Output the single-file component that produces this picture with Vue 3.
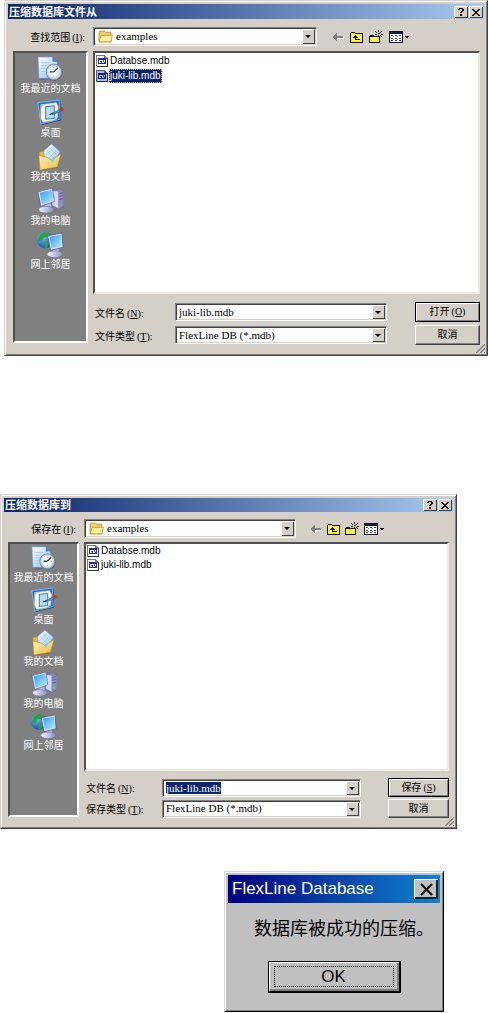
<template>
  <main class="page">
    <svg class="symbols" width="0" height="0" aria-hidden="true">
      <defs>
        <linearGradient id="screen" x1="0" y1="0" x2="1" y2="1">
          <stop offset="0" stop-color="#2f9bf0" />
          <stop offset="0.6" stop-color="#7fd0ff" />
          <stop offset="1" stop-color="#b8ecff" />
        </linearGradient>
        <linearGradient id="folder" x1="0" y1="0" x2="1" y2="1">
          <stop offset="0" stop-color="#fff6b8" />
          <stop offset="1" stop-color="#eebb3c" />
        </linearGradient>
        <linearGradient id="paper" x1="0" y1="0" x2="1" y2="1">
          <stop offset="0" stop-color="#ffffff" />
          <stop offset="1" stop-color="#8fc4f5" />
        </linearGradient>
        <linearGradient id="metal" x1="0" y1="0" x2="1" y2="0">
          <stop offset="0" stop-color="#f4f4fd" />
          <stop offset="1" stop-color="#9090c4" />
        </linearGradient>
        <radialGradient id="globe" cx="0.35" cy="0.3" r="0.8">
          <stop offset="0" stop-color="#7cc4ff" />
          <stop offset="1" stop-color="#0b3cb0" />
        </radialGradient>

        <symbol id="place-recent" viewBox="0 0 28 28">
          <path d="M2 3l15-1 5 5v18l-19 1z" fill="#444" opacity=".4" />
          <path d="M1 2h15l5 5v17H2z" fill="url(#paper)" stroke="#5d9be0" stroke-width=".7" />
          <path d="M16 2v5h5z" fill="#3b83dd" />
          <path d="M4 8h9M4 11h8M4 14h6M4 17h5M4 20h5" stroke="#9fcaf5" />
          <circle cx="18" cy="18" r="8.6" fill="#596579" />
          <circle cx="17.5" cy="17.5" r="8" fill="#c3d4e6" stroke="#8194ab" />
          <circle cx="17.5" cy="17.5" r="5.8" fill="#f5fbff" />
          <path d="M17.5 17.5l4-4M17.5 17.5h-4" stroke="#26456f" stroke-width="1.4" />
          <path d="M17.5 12.4v1.4M17.5 21.4v1.4M22.6 17.5h-1.4" stroke="#d88842" />
        </symbol>

        <symbol id="place-desktop" viewBox="0 0 28 28">
          <path d="M2 5l22-3 1 20-20 5z" fill="#173667" />
          <path d="M1 4l22-3 1 20-20 5z" fill="#1d6fd8" stroke="#8dc6ff" stroke-width=".8" />
          <path d="M4 6l16-2 2 4-1 12-4 2-11 2-2-4z" fill="#fff7d4" stroke="#f3d980" stroke-width=".6" />
          <path d="M4 6l4-1-4 4zM21 20l-4 2 4-5z" fill="#8ed0ff" />
          <path d="M9 8l9-1v13l-9 1z" fill="#b4ddff" stroke="#2778d2" />
          <path d="M15 15l9-4 1 2-9 3z" fill="#4aa2e8" stroke="#214d83" stroke-width=".6" />
          <path d="M13 16l4-1" stroke="#222" />
          <circle cx="25.5" cy="10.5" r="2" fill="#c4352a" />
        </symbol>

        <symbol id="place-documents" viewBox="0 0 28 28">
          <path d="M4 10l3-2 3 2 9 3v13L5 28z" fill="#333" opacity=".4" />
          <path d="M2 9l6-1 2 3 11-1v15L3 27z" fill="#e8b646" stroke="#a97818" stroke-width=".6" />
          <path d="M7 8l8-7 9 8-7 13-9-4z" fill="url(#paper)" stroke="#5f9ad8" stroke-width=".6" />
          <path d="M10 8l6 6M13 5l7 7M17 5l-8 8M20 8l-8 8" stroke="#8fc0ee" stroke-width=".6" />
          <path d="M2 13l9 2 4 3 10-7-4 14-18 3z" fill="url(#folder)" stroke="#b17f1c" stroke-width=".6" />
          <path d="M14 17l3-2 3-2-4 8z" fill="#8ec8f7" />
        </symbol>

        <symbol id="place-computer" viewBox="0 0 28 28">
          <path d="M16 4l7-2 5 2v16l-6 3-7-4z" fill="#8d8dbd" stroke="#5b5b91" stroke-width=".6" />
          <path d="M16 4l6 1v17l-6-3z" fill="#d6d6f0" />
          <path d="M23 7l4-1M23 10l4-1M23 13l4-1" stroke="#5d5d94" />
          <circle cx="25" cy="18" r="1" fill="#55dc68" />
          <path d="M9 15h5l1 6H8z" fill="#b9b9de" />
          <ellipse cx="9.5" cy="23.5" rx="8" ry="3.5" fill="url(#metal)" stroke="#64649a" stroke-width=".5" />
          <path d="M1 5l15-4 2 14L4 20z" fill="#dfe0f4" stroke="#6262a0" stroke-width=".8" />
          <path d="M3 6l12-3 2 11L5 18z" fill="url(#screen)" />
        </symbol>

        <symbol id="place-network" viewBox="0 0 28 28">
          <circle cx="8.5" cy="9.5" r="8.5" fill="url(#globe)" />
          <path d="M3 4l5-3 5 1-2 4-4 1-2 4-4-1zM8 10l4 2-1 5-3 1z" fill="#28a63a" />
          <path d="M17 16h5l1 6h-7z" fill="#b9b9de" />
          <ellipse cx="18.5" cy="24" rx="8" ry="3.5" fill="url(#metal)" stroke="#64649a" stroke-width=".5" />
          <path d="M11 5l15-3 1 15-13 3z" fill="#dfe0f4" stroke="#52528c" stroke-width=".8" />
          <path d="M13 6l12-2 .7 12L15 18z" fill="url(#screen)" />
        </symbol>

        <symbol id="folder-open" viewBox="0 0 14 12">
          <path d="M1 2l1-1h4l1 1h5v9H1z" fill="#f3ce63" stroke="#b28a2b" stroke-width=".8" />
          <path d="M3 5h10.500l-1.500 6H1z" fill="#fff0a0" stroke="#c59b35" stroke-width=".8" />
        </symbol>

        <symbol id="file-mdb" viewBox="0 0 12 12">
          <path d="M0 0h9v1h1v1h1v1h1v9H0z" fill="#77777c" />
          <path d="M1 1h7v3h3v7H1z" fill="#fff" />
          <path d="M11 3h1v9H1v-1h10z" fill="#333" />
          <path d="M2 3h8v6H2z" fill="#20309a" />
          <path d="M3 5h6v3H3z" fill="#e4e8ff" />
          <path d="M4 6h1v1H4zM7 5h1v2H7z" fill="#c52a38" />
          <path d="M5 6h1v2H5zM8 7h1v1H8z" fill="#243bd0" />
        </symbol>

        <symbol id="tool-back" viewBox="0 0 12 12">
          <path d="M2 7l4 4V8h6V6h-1v1H5z" fill="#fff" />
          <path d="M0 6l1-1h1V4h1V3h1V2h1v3h6v2H5v3H4V9H3V8H2V7H1z" fill="#808080" />
        </symbol>

        <symbol id="tool-up" viewBox="0 0 13 12">
          <path d="M0 2h1V1h4v1h8v10H0z" fill="#111" />
          <path d="M1 2h4v1h7v8H1z" fill="#fbf03c" />
          <path d="M6 3h1v1H6zM8 4h1v1H8zM10 3h1v1h-1zM2 4h1v1H2zM10 6h1v1h-1zM2 8h1v1H2zM10 9h1v1h-1z" fill="#fffcb0" />
          <path d="M5 4h1v1h1v1h1v1H6v1h4v1H5V7H3V6h1V5h1z" fill="#111" />
        </symbol>

        <symbol id="tool-new" viewBox="0 0 14 13">
          <path d="M0 6h1V5h4v1h6v7H0z" fill="#111" />
          <path d="M1 7h9v5H1z" fill="#fbf03c" />
          <path d="M2 7h1v1H2zM4 8h1v1H4zM6 7h1v1H6zM8 8h1v1H8zM3 10h1v1H3zM7 10h1v1H7z" fill="#fffcb0" />
          <path d="M9 0h1v2H9zM6 1h1v1h1v1H7V2H6zM12 1h1v1h-1zM11 2h1v1h-1zM9 3h2v1H9zM12 4h2v1h-2zM11 5h1v1h-1zM12 6h1v1h-1zM6 4h2v1H6zM9 5h1v1H9z" fill="#222" />
        </symbol>

        <symbol id="tool-views" viewBox="0 0 20 12">
          <path d="M0 0h14v12H0z" fill="#111" />
          <path d="M1 3h12v8H1z" fill="#fff" />
          <path d="M1 1h12v1H1z" fill="#0a1f78" />
          <path d="M2 4h2v1H2zM6 4h2v1H6zM10 4h2v1h-2zM2 7h2v1H2zM6 7h2v1H6zM10 7h2v1h-2zM2 9h2v1H2zM6 9h2v1H6zM10 9h2v1h-2z" fill="#2630a8" />
          <path d="M4 5h1v1H4zM8 5h1v1H8zM4 8h1v1H4zM8 8h1v1H8z" fill="#777" />
          <path d="M16 5h4v1h-1v1h-2V6h-1z" fill="#111" />
        </symbol>

        <symbol id="glyph-help" viewBox="0 0 8 8">
          <path d="M1 1h1V0h4v1h1v2H6v1H5v1H3V4h1V3h1V1H3v1H1zM3 6h2v2H3z" fill="#111" />
        </symbol>

        <symbol id="glyph-close" viewBox="0 0 8 8">
          <path d="M0 1h2v1h1v1h2V2h1V1h2v1H7v1H6v1H5v1h1v1h1v1h1v1H6V7H5V6H3v1H2v1H0V7h1V6h1V5h1V4H2V3H1V2H0z" fill="#111" />
        </symbol>
      </defs>
    </svg>

    <section
      v-for="dialog in dialogs"
      :key="dialog.id"
      class="dialog"
      :class="{ compact: dialog.compact }"
      role="dialog"
      :aria-labelledby="`${dialog.id}-title`"
    >
      <header class="title-bar">
        <h2 :id="`${dialog.id}-title`">{{ dialog.title }}</h2>
        <button class="caption-button" type="button" aria-label="帮助">
          <svg width="8" height="8"><use href="#glyph-help" /></svg>
        </button>
        <button class="caption-button" type="button" aria-label="关闭">
          <svg width="8" height="8"><use href="#glyph-close" /></svg>
        </button>
      </header>

      <div class="look-in">
        <label :for="`${dialog.id}-folder`">{{ dialog.folderLabel }}<span class="key">(<u>I</u>):</span></label>
        <div class="field">
          <svg class="folder-icon" width="15" height="13"><use href="#folder-open" /></svg>
          <select :id="`${dialog.id}-folder`" class="with-icon">
            <option>examples</option>
          </select>
          <span class="arrow"></span>
        </div>
        <div class="toolbar">
          <button v-for="tool in tools" :key="tool.icon" type="button" :aria-label="tool.name">
            <svg :width="tool.width" :height="tool.height"><use :href="`#${tool.icon}`" /></svg>
          </button>
        </div>
      </div>

      <div class="body">
        <nav class="places">
          <button v-for="place in places" :key="place.icon" type="button">
            <svg class="place-icon"><use :href="`#${place.icon}`" /></svg>
            <span>{{ place.name }}</span>
          </button>
        </nav>

        <div class="content">
          <ul class="files">
            <li v-for="file in files" :key="file">
              <button
                type="button"
                :class="{ selected: dialog.selected === file }"
                @click="pick(dialog, file)"
              >
                <svg width="12" height="12"><use href="#file-mdb" /></svg>
                <span>{{ file }}</span>
              </button>
            </li>
          </ul>

          <div class="form-row">
            <label :for="`${dialog.id}-name`">文件名<span class="key">(<u>N</u>):</span></label>
            <div class="field">
              <input :id="`${dialog.id}-name`" v-model="dialog.fileName" type="text" spellcheck="false" />
              <span class="arrow"></span>
            </div>
            <button class="push default" type="button">
              {{ dialog.action }}<span class="key">(<u>{{ dialog.actionKey }}</u>)</span>
            </button>
          </div>

          <div class="form-row">
            <label :for="`${dialog.id}-type`">{{ dialog.typeLabel }}<span class="key">(<u>T</u>):</span></label>
            <div class="field">
              <select :id="`${dialog.id}-type`">
                <option>FlexLine DB (*.mdb)</option>
              </select>
              <span class="arrow"></span>
            </div>
            <button class="push" type="button">取消</button>
          </div>
        </div>
      </div>

      <svg class="grip" width="10" height="10" viewBox="0 0 10 10" aria-hidden="true">
        <path d="M0 10L10 0M4 10l6-6M8 10l2-2" stroke="#fff" />
        <path d="M1 10l9-9M5 10l5-5M9 10l1-1" stroke="#808080" stroke-width="1.5" />
      </svg>
    </section>

    <section class="message-box" role="alertdialog" aria-labelledby="message-title">
      <header>
        <h2 id="message-title">FlexLine Database</h2>
        <button class="message-close" type="button" aria-label="关闭">
          <svg width="13" height="13" viewBox="0 0 13 13"><path d="M1 1l11 11M12 1L1 12" stroke="#111" stroke-width="2.2" /></svg>
        </button>
      </header>
      <p>数据库被成功的压缩。</p>
      <button class="ok" type="button"><span>OK</span></button>
    </section>
  </main>
</template>

<script setup>
import { onMounted, reactive } from "vue";

const files = ["Databse.mdb", "juki-lib.mdb"];

const places = [
  { icon: "place-recent", name: "我最近的文档" },
  { icon: "place-desktop", name: "桌面" },
  { icon: "place-documents", name: "我的文档" },
  { icon: "place-computer", name: "我的电脑" },
  { icon: "place-network", name: "网上邻居" }
];

const tools = [
  { icon: "tool-back", name: "后退", width: 12, height: 12 },
  { icon: "tool-up", name: "向上一级", width: 13, height: 12 },
  { icon: "tool-new", name: "新建文件夹", width: 14, height: 13 },
  { icon: "tool-views", name: "查看", width: 20, height: 12 }
];

const dialogs = reactive([
  {
    id: "open",
    compact: false,
    title: "压缩数据库文件从",
    folderLabel: "查找范围",
    typeLabel: "文件类型",
    action: "打开",
    actionKey: "O",
    selected: "juki-lib.mdb",
    fileName: "juki-lib.mdb"
  },
  {
    id: "save",
    compact: true,
    title: "压缩数据库到",
    folderLabel: "保存在",
    typeLabel: "保存类型",
    action: "保存",
    actionKey: "S",
    selected: null,
    fileName: "juki-lib.mdb"
  }
]);

function pick(dialog, file) {
  dialog.selected = file;
  dialog.fileName = file;
}

// the save dialog opens with its file name selected
onMounted(() => {
  document.getElementById("save-name").select();
});
</script>

<style>
body {
  margin: 0;
  background: #fff;
}
</style>

<style scoped>
.page {
  font-family: "Liberation Sans", "Noto Sans CJK SC", sans-serif;
  font-size: 10px;
  color: #000;
}

.symbols {
  position: absolute;
}

button,
input,
select {
  margin: 0;
  padding: 0;
  border: 0;
  border-radius: 0;
  background: none;
  font: inherit;
  color: inherit;
}

h2,
p,
ul {
  margin: 0;
  padding: 0;
}

svg {
  display: block;
}

.dialog {
  --places: 75px;
  --tools: 163px;
  --tool-indent: 15px;
  --tool-gap: 6px;
  --label: 82px;
  --push: 65px;
  --push-gap: 28px;
  --row: 20px;
  --row-gap: 3px;
  --list: 243px;
  --file: 15px;
  --title: 15px;
  --icon: 27px;
  --place-gap: 3px;
  position: relative;
  margin-left: 4px;
  padding: 3px 3px 10px;
  border: 1px solid;
  border-color: #d4d0c8 #404040 #404040 #d4d0c8;
  box-shadow: inset 1px 1px #fff, inset -1px -1px #808080;
  background: #d4d0c8;
}

.dialog.compact {
  --places: 71px;
  --tools: 153px;
  --tool-indent: 14px;
  --tool-gap: 5px;
  --label: 78px;
  --push: 61px;
  --push-gap: 27px;
  --row: 19px;
  --row-gap: 2px;
  --list: 229px;
  --file: 14px;
  --title: 14px;
  --icon: 26px;
  --place-gap: 2px;
  margin: 138px 31px 0 0;
}

.title-bar {
  display: flex;
  align-items: center;
  gap: 1px;
  height: var(--title);
  padding: 0 1px;
  background: linear-gradient(to right, #0a246a, #a6caf0);
}

.title-bar h2 {
  flex: 1;
  font-size: 11px;
  line-height: 14px;
  font-weight: bold;
  color: #fff;
}

.caption-button {
  display: flex;
  align-items: center;
  justify-content: center;
  width: 14px;
  height: 12px;
  background: #d4d0c8;
  box-shadow: inset 1px 1px #fff, inset -1px -1px #404040;
}

.look-in {
  display: grid;
  grid-template-columns: var(--places) 1fr var(--tools);
  align-items: center;
  margin: 8px 4px 5px 5px;
}

.look-in label {
  padding-right: 3px;
  text-align: right;
  white-space: nowrap;
}

.look-in .field {
  margin-left: 5px;
}

.compact .look-in {
  margin: 7px 4px 4px;
}

.key {
  margin-left: 2px;
  font-family: "Liberation Serif", serif;
}

.field {
  position: relative;
  height: 19px;
  box-sizing: border-box;
  border: 1px solid;
  border-color: #808080 #fff #fff #808080;
  box-shadow: inset 1px 1px #404040, inset -1px -1px #d4d0c8;
  background: #fff;
}

.field select,
.field input {
  display: block;
  box-sizing: border-box;
  width: 100%;
  height: 100%;
  padding: 0 18px 0 3px;
  appearance: none;
  outline: none;
  font-family: "Liberation Serif", "Noto Sans CJK SC", serif;
  font-size: 11px;
  line-height: 13px;
}

.field input::selection {
  background: #0a246a;
  color: #fff;
}

.field .with-icon {
  padding-left: 22px;
}

.folder-icon {
  position: absolute;
  left: 4px;
  top: 2px;
}

.arrow {
  position: absolute;
  top: 1px;
  right: 1px;
  bottom: 1px;
  width: 13px;
  background: #d4d0c8;
  box-shadow: inset 1px 1px #fff, inset -1px -1px #404040;
  pointer-events: none;
}

.arrow::after {
  content: "";
  position: absolute;
  left: 3px;
  top: 6px;
  border: solid transparent;
  border-width: 3px 3px 0;
  border-top-color: #000;
}

.toolbar {
  display: flex;
  align-items: center;
  gap: var(--tool-gap);
  padding-left: var(--tool-indent);
}

.toolbar svg,
.files svg,
.caption-button svg {
  shape-rendering: crispEdges;
}

.body {
  display: grid;
  grid-template-columns: var(--places) 1fr;
  gap: 5px;
  margin: 0 4px 0 5px;
}

.compact .body {
  margin-left: 4px;
}

.places {
  display: flex;
  flex-direction: column;
  gap: var(--place-gap);
  margin-bottom: 2px;
  padding-top: 2px;
  border: 2px solid;
  border-color: #505050 #fff #fff #505050;
  background: #808080;
}

.compact .places {
  margin-bottom: 1px;
  padding-top: 1px;
}

.places button {
  display: flex;
  flex-direction: column;
  align-items: center;
  line-height: 14px;
  white-space: nowrap;
  color: #fff;
}

.place-icon {
  width: var(--icon);
  height: var(--icon);
}

.files {
  box-sizing: border-box;
  height: var(--list);
  margin-bottom: 8px;
  border: 2px solid;
  border-color: #505050 #ece9e2 #ece9e2 #505050;
  background: #fff;
  list-style: none;
}

.compact .files {
  margin-bottom: 7px;
}

.files button {
  display: flex;
  align-items: center;
  gap: 1px;
  height: var(--file);
  padding-left: 1px;
}

.files span {
  padding: 0 1px;
  line-height: 14px;
}

.files .selected span {
  background: #0a246a;
  outline: 1px dotted #d8b860;
  outline-offset: -1px;
  color: #fff;
}

.files .selected svg {
  filter: brightness(0.6) sepia(1) hue-rotate(190deg) saturate(2);
}

.form-row {
  display: grid;
  grid-template-columns: var(--label) 1fr var(--push);
  align-items: center;
  height: var(--row);
}

.form-row + .form-row {
  margin-top: var(--row-gap);
}

.form-row label {
  padding-left: 2px;
  white-space: nowrap;
}

.form-row .field {
  height: 18px;
  margin-right: var(--push-gap);
}

.push {
  height: 100%;
  border: 1px solid;
  border-color: #fff #404040 #404040 #fff;
  box-shadow: inset -1px -1px #808080;
  line-height: 14px;
}

.push.default {
  border-color: #000;
  box-shadow: inset 1px 1px #fff, inset -1px -1px #808080;
}

.grip {
  position: absolute;
  right: 2px;
  bottom: 2px;
}

.message-box {
  box-sizing: border-box;
  width: 220px;
  margin: 42px 0 0 224px;
  padding: 3px 3px 18px;
  border: 1px solid;
  border-color: #d8d8d8 #000 #000 #d8d8d8;
  box-shadow: inset 1px 1px #fff, inset -1px -1px #808080;
  background: #c0c0c0;
}

.message-box header {
  display: flex;
  align-items: center;
  height: 28px;
  padding: 0 2px 0 4px;
  background: linear-gradient(to right, #000080, #1084d0);
}

.message-box h2 {
  flex: 1;
  font-size: 17px;
  line-height: 24px;
  font-weight: normal;
  color: #fff;
}

.message-close {
  display: flex;
  align-items: center;
  justify-content: center;
  width: 24px;
  height: 20px;
  background: #c0c0c0;
  box-shadow: inset 1px 1px #fff, inset -2px -2px #202020;
}

.message-box p {
  margin: 14px 0 20px 26px;
  font-size: 18px;
  line-height: 24px;
  white-space: nowrap;
}

.ok {
  display: block;
  width: 133px;
  height: 32px;
  margin: 0 auto;
  padding: 4px;
  border: 1px solid #000;
  border-width: 1px 2px 2px 1px;
  box-shadow: inset 1px 1px #fff, inset -2px -2px #808080;
  font-size: 17px;
  line-height: 19px;
}

.ok span {
  display: block;
  margin: 0 1px;
  border: 1px dotted #000;
}
</style>
